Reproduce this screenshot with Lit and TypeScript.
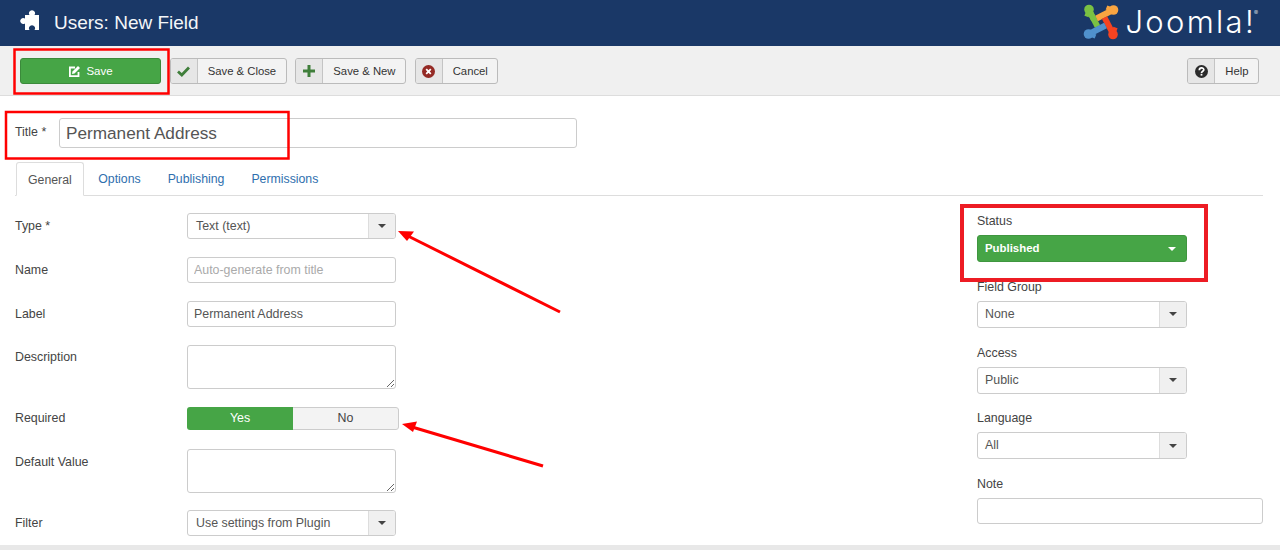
import { LitElement, html, css, svg } from "lit";
import { customElement } from "lit/decorators.js";

const caret = () => html`<svg class="caret" width="8" height="4" viewBox="0 0 8 4"><path d="M0 0h8L4 4z" fill="currentColor"/></svg>`;

const puzzle = html`<svg class="puzzle" width="20" height="20" viewBox="0 0 20 20"><path fill="#fff" d="M5 5H9.500a3 3 0 1 1 5 0H19V20H14.500a3 3 0 1 0-5 0H5V13.500a3 3 0 1 1 0-5z"/></svg>`;

const piece = (color: string, rot: number) => svg`<g transform="rotate(${rot})" stroke="${color}" fill="none">
  <path d="M-12 -12 L-3.500 4.500" stroke-width="6"/>
  <path d="M-12 -12 L-14.500 -5.500" stroke-width="4.500"/>
  <circle cx="-12" cy="-12.500" r="4.800" fill="${color}" stroke="none"/>
</g>`;

const logo = html`<svg class="logo" width="36" height="36" viewBox="-18 -18 36 36">
  ${piece("#7ac143", 0)}${piece("#f9a541", 90)}${piece("#f44321", 180)}${piece("#5091cd", 270)}
  <path d="M-12 -12 L-7 -2" stroke="#7ac143" stroke-width="6"/>
</svg>`;

const editIcon = html`<svg width="13" height="13" viewBox="0 0 13 13"><path fill="none" stroke="#fff" stroke-width="1.800" d="M10.500 7v4.100H1.900V2.500H7"/><path fill="#fff" d="M4.500 6.500 10 1l2 2-5.500 5.500-2.500.6z"/></svg>`;
const checkIcon = html`<svg width="13" height="11" viewBox="0 0 13 11"><path fill="none" stroke="#3f7e3a" stroke-width="2.800" d="M1 5.500 4.800 9 12 1.500"/></svg>`;
const plusIcon = html`<svg width="12" height="12" viewBox="0 0 12 12"><path fill="#3f7e3a" d="M4.500 0h3v4.500H12v3H7.500V12h-3V7.500H0v-3h4.500z"/></svg>`;
const cancelIcon = html`<svg width="13" height="13" viewBox="0 0 13 13"><circle cx="6.500" cy="6.500" r="6.500" fill="#942a25"/><path stroke="#fff" stroke-width="1.800" d="M4.200 4.200l4.600 4.600M8.800 4.200 4.200 8.800"/></svg>`;
const helpIcon = html`<svg width="13" height="13" viewBox="0 0 13 13"><circle cx="6.500" cy="6.500" r="6.500" fill="#2b2b2b"/><path fill="none" stroke="#fff" stroke-width="1.700" d="M4.300 5.200c0-3 4.500-3 4.500-.4 0 1.500-2.300 1.500-2.300 3.200"/><rect x="5.600" y="8.800" width="1.800" height="1.800" fill="#fff"/></svg>`;

@customElement("app-root")
export class AppRoot extends LitElement {
  static styles = css`
    :host { display: block; position: relative; width: 1280px; height: 550px; overflow: hidden; background: #fff;
      font: 12.400px/16px "Liberation Sans", Arial, sans-serif; color: #555; }
    * { box-sizing: border-box; }
    .header { height: 46px; background: #1a3867; display: flex; align-items: center; padding: 0 22px 0 20px; color: #fff; }
    .puzzle { margin-top: -6px; flex: none; }
    .header h1 { margin: -1px 0 0 14px; font: 400 19px/24px "Liberation Sans", Arial, sans-serif; color: #f4f6f9; }
    .brand { margin-left: auto; display: flex; align-items: center; }
    .logo { display: block; margin: -2px 6px 0 0; }
    .word { font: 300 31px/40px "Inter", sans-serif; color: #fff; letter-spacing: 2.300px; margin-top: -3px; }
    .word sup { font-size: 6px; line-height: 6px; vertical-align: 18px; letter-spacing: 0; margin-left: -2px; }
    .toolbar { height: 50px; background: #f0f0f0; border-bottom: 1px solid #ddd; display: flex; align-items: flex-start; padding: 12px 21px 0 20px; gap: 8.700px; }
    .btn { height: 26px; display: flex; border: 1px solid #bbb; border-radius: 3px; background: #f3f3f3; color: #333; overflow: hidden; font-size: 11.300px; line-height: 24px; }
    .btn .ic { width: 27px; background: #e6e6e6; border-right: 1px solid #c4c4c4; display: flex; align-items: center; justify-content: center; }
    .btn .tx { padding: 0 9.500px 0 10px; white-space: nowrap; }
    .btn.save { width: 141px; justify-content: center; align-items: center; gap: 5px; background: #46a546; border-color: #3b8a3b; color: #fff; font-size: 11.500px; }
    .spacer { margin-left: auto; }
    .content { padding: 22px 17px 0 15px; }
    .title-row { display: flex; align-items: flex-start; }
    .title-row label { width: 44px; padding-top: 6px; color: #444; }
    .title-input { width: 518px; height: 30px; border: 1px solid #ccc; border-radius: 3px; padding: 0 6px; font: 17.200px "Liberation Sans", Arial, sans-serif; color: #555; background: #fff; outline: none; }
    .tabs { margin-top: 14px; height: 34px; display: flex; border-bottom: 1px solid #ddd; padding-left: 1px; font-size: 12.300px; }
    .tab { color: #2f6fae; padding: 8.500px 13.500px 0; line-height: 16px; height: 33px; white-space: nowrap; }
    .tab.active { color: #555; height: 34px; background: #fff; border: 1px solid #ddd; border-bottom-color: #fff; border-radius: 3px 3px 0 0; padding: 8.500px 11px 0; margin-right: 1px; }
    .body { margin-top: 17px; display: grid; grid-template-columns: 962px 286px; }
    .row { display: grid; grid-template-columns: 172px 212px; margin-bottom: 18px; align-items: start; }
    .row.req { margin-bottom: 19px; }
    .row.tight { margin-bottom: 17px; }
    .row > label { padding-top: 5px; color: #444; }
    .row.ta > label { padding-top: 4px; }
    .row.tight > label { padding-top: 5px; }
    .row.req > label { padding-top: 3px; }
    .field { width: 209px; height: 26px; border: 1px solid #ccc; border-radius: 3px; padding: 0 6px; background: #fff; font: 12.400px "Liberation Sans", Arial, sans-serif; color: #555; outline: none; display: block; }
    .field::placeholder { color: #aaa; opacity: 1; }
    textarea.field { height: 44px; padding: 4px 6px; resize: vertical; }
    .select { width: 209px; height: 26px; border: 1px solid #ccc; border-radius: 3px; background: #fff; display: flex; overflow: hidden; color: #555; line-height: 24px; }
    .select .v { flex: 1; padding-left: 8px; }
    .select .arrow { width: 27px; flex: none; background: #f0f0f0; border-left: 1px solid #ddd; color: #444; display: flex; align-items: center; justify-content: center; }
    .toggle { width: 212px; height: 23px; display: grid; grid-template-columns: 106px 106px; border-radius: 3px; overflow: hidden; text-align: center; line-height: 22px; }
    .toggle .yes { background: #46a546; color: #fff; }
    .toggle .no { background: #f3f3f3; border: 1px solid #ccc; border-left: none; border-radius: 0 3px 3px 0; color: #444; line-height: 21px; }
    .side label { display: block; height: 16px; line-height: 17px; margin-bottom: 6px; color: #444; }
    .side .group { margin-bottom: 16.750px; }
    .side .select { width: 210px; height: 27px; line-height: 24px; }
    .side .select .v { padding-left: 7px; }
    .side .select.pub { background: #46a546; border-color: #3f963f; color: #fff; font-weight: 700; font-size: 11.400px; }
    .side .select.pub .arrow { background: none; border: none; color: #fff; width: 29px; }
    .side .field { width: 286px; }
    .bottom { position: absolute; left: 0; right: 0; bottom: 0; height: 5px; background: #e8e8e8; }
    .marks { position: absolute; left: 0; top: 0; pointer-events: none; }
  `;

  render() {
    return html`
      <div class="header">
        ${puzzle}
        <h1>Users: New Field</h1>
        <div class="brand">${logo}<span class="word">Joomla!<sup>®</sup></span></div>
      </div>
      <div class="toolbar">
        <div class="btn save">${editIcon}<span>Save</span></div>
        <div class="btn"><span class="ic">${checkIcon}</span><span class="tx">Save &amp; Close</span></div>
        <div class="btn"><span class="ic">${plusIcon}</span><span class="tx">Save &amp; New</span></div>
        <div class="btn"><span class="ic">${cancelIcon}</span><span class="tx">Cancel</span></div>
        <div class="btn spacer"><span class="ic">${helpIcon}</span><span class="tx">Help</span></div>
      </div>
      <div class="content">
        <div class="title-row">
          <label>Title *</label>
          <input class="title-input" .value=${"Permanent Address"} />
        </div>
        <div class="tabs">
          <div class="tab active">General</div>
          <div class="tab">Options</div>
          <div class="tab">Publishing</div>
          <div class="tab">Permissions</div>
        </div>
        <div class="body">
          <div class="main">
            <div class="row"><label>Type *</label><div class="select"><span class="v">Text (text)</span><span class="arrow">${caret()}</span></div></div>
            <div class="row"><label>Name</label><input class="field" placeholder="Auto-generate from title" /></div>
            <div class="row"><label>Label</label><input class="field" .value=${"Permanent Address"} /></div>
            <div class="row ta"><label>Description</label><textarea class="field"></textarea></div>
            <div class="row req"><label>Required</label><div class="toggle"><span class="yes">Yes</span><span class="no">No</span></div></div>
            <div class="row ta tight"><label>Default Value</label><textarea class="field"></textarea></div>
            <div class="row"><label>Filter</label><div class="select"><span class="v">Use settings from Plugin</span><span class="arrow">${caret()}</span></div></div>
          </div>
          <div class="side">
            <div class="group"><label>Status</label><div class="select pub"><span class="v">Published</span><span class="arrow">${caret()}</span></div></div>
            <div class="group"><label>Field Group</label><div class="select"><span class="v">None</span><span class="arrow">${caret()}</span></div></div>
            <div class="group"><label>Access</label><div class="select"><span class="v">Public</span><span class="arrow">${caret()}</span></div></div>
            <div class="group"><label>Language</label><div class="select"><span class="v">All</span><span class="arrow">${caret()}</span></div></div>
            <div class="group"><label>Note</label><input class="field" /></div>
          </div>
        </div>
      </div>
      <div class="bottom"></div>
      <svg class="marks" width="1280" height="550" viewBox="0 0 1280 550" fill="none">
        ${svg`
          <rect x="14.500" y="49.500" width="154" height="44" stroke="#f00" stroke-width="2.500"/>
          <rect x="6" y="112" width="282.500" height="46.500" stroke="#f00" stroke-width="2.500"/>
          <rect x="962" y="206" width="244" height="74" stroke="#ed1c24" stroke-width="4"/>
          <path d="M560 312 L408 236" stroke="#f00" stroke-width="3"/>
          <path d="M398 231 L414 231.500 L407 241z" fill="#f00"/>
          <path d="M543 466 L412 427" stroke="#f00" stroke-width="3"/>
          <path d="M402 424 L417 421.500 L413 432z" fill="#f00"/>
        `}
      </svg>
    `;
  }
}
